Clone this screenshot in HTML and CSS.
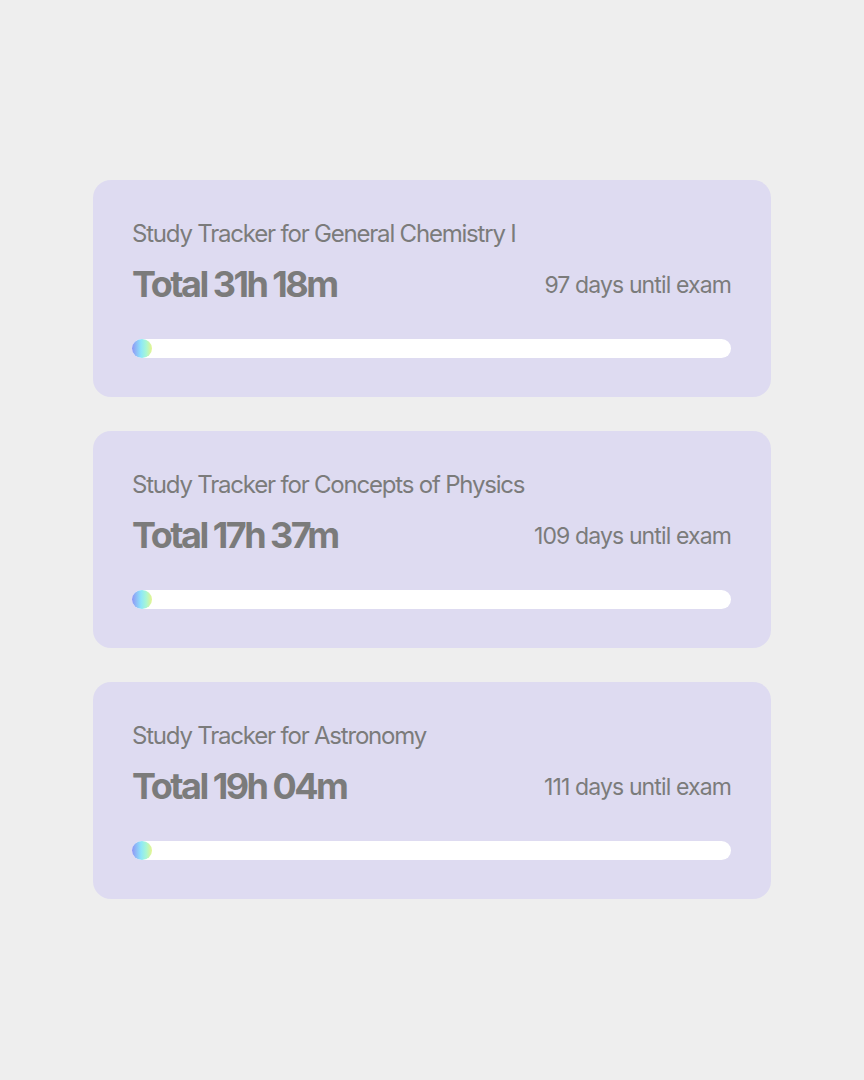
FILE: index.html
```html
<!DOCTYPE html>
<html>
<head>
<meta charset="utf-8">
<link rel="stylesheet" href="styles.css">
</head>
<body>
<main class="list">
  <section class="card">
    <div class="title">Study Tracker for General Chemistry I</div>
    <div class="row">
      <div class="total">Total 31h 18m</div>
      <div class="days">97 days until exam</div>
    </div>
    <div class="bar"><div class="dot"></div></div>
  </section>
  <section class="card">
    <div class="title">Study Tracker for Concepts of Physics</div>
    <div class="row">
      <div class="total">Total 17h 37m</div>
      <div class="days">109 days until exam</div>
    </div>
    <div class="bar"><div class="dot"></div></div>
  </section>
  <section class="card">
    <div class="title">Study Tracker for Astronomy</div>
    <div class="row">
      <div class="total">Total 19h 04m</div>
      <div class="days">111 days until exam</div>
    </div>
    <div class="bar"><div class="dot"></div></div>
  </section>
</main>
</body>
</html>
```
FILE: styles.css
```css
html, body {
  margin: 0;
  padding: 0;
  background: #eeeeee;
}
body {
  font-family: Inter, "Noto Sans", sans-serif;
  color: #7b7b7b;
}
.list {
  display: flex;
  flex-direction: column;
  gap: 34px;
  padding: 180px 0 0 93px;
  width: 678px;
}
.card {
  background: #dedbf1;
  border-radius: 18px;
  height: 217px;
  box-sizing: border-box;
  padding: 39px 40px 0 39px;
  display: flex;
  flex-direction: column;
}
.title {
  font-size: 24px;
  line-height: 30px;
  letter-spacing: -0.05em;
  font-weight: 400;
}
.row {
  display: flex;
  justify-content: space-between;
  align-items: flex-end;
  margin-top: 13px;
}
.total {
  font-size: 36px;
  line-height: 44px;
  font-weight: 700;
  letter-spacing: -0.07em;
}
.days {
  font-size: 23px;
  line-height: 30px;
  letter-spacing: -0.038em;
  margin-bottom: 6px;
}
.bar {
  margin-top: 33px;
  height: 19px;
  border-radius: 10px;
  background: #ffffff;
  display: flex;
}
.dot {
  width: 20px;
  height: 19px;
  border-radius: 50%;
  background: linear-gradient(90deg, #8f95f4 0%, #8de6fa 45%, #a6f6d6 70%, #e7f58c 100%);
}
```
